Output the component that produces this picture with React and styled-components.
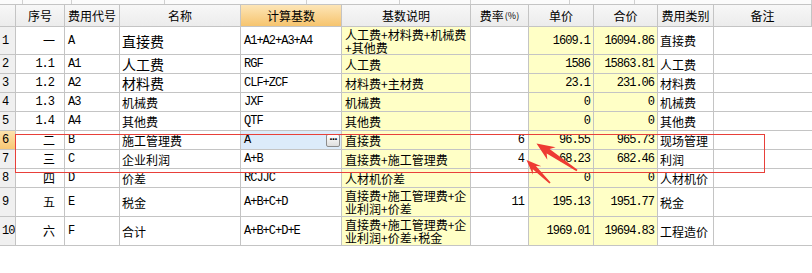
import React from "react";
import styled, { createGlobalStyle } from "styled-components";

const GlobalStyle = createGlobalStyle`
  html, body {
    margin: 0;
    padding: 0;
    background: #ffffff;
  }
`;

const CJK = `"Noto Sans CJK SC", "Noto Sans", sans-serif`;
const MONO = `"Liberation Mono", "Noto Sans CJK SC", monospace`;
const COLS = [16, 49, 55, 121, 101, 129, 58, 65, 64, 56, 98];
const LINE = "#c4c4c4";

const BG = {
  white: "#ffffff",
  yellow: "#ffffc6",
  blue: "#dcebfa",
  gray: "#f0f0f0",
  picked: "linear-gradient(#fde3ad, #f8c874)",
};

const Page = styled.div`
  position: relative;
  width: 812px;
  height: 273px;
  overflow: hidden;
  background: #fff;
  color: #000;
`;

const TopStrip = styled.div`
  display: flex;
  height: 4px;
  border-bottom: 1px solid ${LINE};
  background: #fbfbfb;
`;

const StripPart = styled.div`
  flex: 0 0 ${(p) => p.$w}px;
  box-sizing: border-box;
  border-right: 1px solid #d0d0d0;
`;

const Row = styled.div`
  display: grid;
  grid-template-columns: ${COLS.map((w) => w + "px").join(" ")};
  height: ${(p) => p.$h}px;
`;

const HeadCell = styled.div`
  box-sizing: border-box;
  display: flex;
  align-items: center;
  justify-content: center;
  border-right: 1px solid ${LINE};
  border-bottom: 1px solid ${LINE};
  background: ${(p) =>
    p.$active ? "linear-gradient(#fde5b6, #f6c46e)" : "linear-gradient(#f7f7f7, #ececec)"};
  font-family: ${CJK};
  font-size: 12px;
  white-space: nowrap;
`;

const Small = styled.span`
  font-size: 9px;
  margin-left: 1px;
`;

const Cell = styled.div`
  box-sizing: border-box;
  display: flex;
  align-items: center;
  justify-content: ${(p) =>
    p.$align === "right" ? "flex-end" : p.$align === "center" ? "center" : "flex-start"};
  padding: 0 ${(p) => p.$pr ?? 3}px 0 ${(p) => p.$pl ?? 3}px;
  border-right: ${(p) => (p.$last ? "none" : `1px solid ${LINE}`)};
  border-bottom: 1px solid ${LINE};
  background: ${(p) => BG[p.$bg || "white"]};
  font-family: ${(p) => (p.$mono ? MONO : CJK)};
  font-size: ${(p) => (p.$mono ? 12 : p.$size || 12)}px;
  letter-spacing: ${(p) => (p.$mono ? "-1px" : "0")};
  white-space: nowrap;
  overflow: hidden;
`;

const Lines = styled.span`
  display: block;
  line-height: 13px;
  white-space: nowrap;
`;

const MoreButton = styled.span`
  box-sizing: border-box;
  width: 14px;
  height: 13px;
  margin-left: auto;
  border: 1px solid #8c8c8c;
  border-radius: 2px;
  background: linear-gradient(#ffffff, #dedede);
  display: flex;
  align-items: center;
  justify-content: center;
  font-family: "DejaVu Sans", sans-serif;
  font-size: 9px;
  font-weight: bold;
  letter-spacing: -1px;
  line-height: 1;
  padding-bottom: 2px;
`;

const Highlight = styled.div`
  position: absolute;
  left: 15px;
  top: 134px;
  width: 750px;
  height: 39px;
  box-sizing: border-box;
  border: 1px solid #e8403a;
  pointer-events: none;
`;

const Overlay = styled.svg`
  position: absolute;
  left: 0;
  top: 0;
  pointer-events: none;
`;

const rows = [
  { n: 1, h: 28, seq: "一", code: "A", name: "直接费", big: true, base: "A1+A2+A3+A4", desc: ["人工费+材料费+机械费", "+其他费"], rate: "", price: "1609.1", total: "16094.86", cat: "直接费" },
  { n: 2, h: 19, seq: "1.1", code: "A1", name: "人工费", big: true, base: "RGF", desc: ["人工费"], rate: "", price: "1586", total: "15863.81", cat: "人工费" },
  { n: 3, h: 19, seq: "1.2", code: "A2", name: "材料费", big: true, base: "CLF+ZCF", desc: ["材料费+主材费"], rate: "", price: "23.1", total: "231.06", cat: "材料费" },
  { n: 4, h: 19, seq: "1.3", code: "A3", name: "机械费", base: "JXF", desc: ["机械费"], rate: "", price: "0", total: "0", cat: "机械费" },
  { n: 5, h: 19, seq: "1.4", code: "A4", name: "其他费", base: "QTF", desc: ["其他费"], rate: "", price: "0", total: "0", cat: "其他费" },
  { n: 6, h: 19, seq: "二", code: "B", name: "施工管理费", base: "A", desc: ["直接费"], rate: "6", price: "96.55", total: "965.73", cat: "现场管理", editing: true },
  { n: 7, h: 19, seq: "三", code: "C", name: "企业利润", base: "A+B", desc: ["直接费+施工管理费"], rate: "4", price: "68.23", total: "682.46", cat: "利润" },
  { n: 8, h: 19, seq: "四", code: "D", name: "价差", base: "RCJJC", desc: ["人材机价差"], rate: "", price: "0", total: "0", cat: "人材机价" },
  { n: 9, h: 29, seq: "五", code: "E", name: "税金", base: "A+B+C+D", desc: ["直接费+施工管理费+企", "业利润+价差"], rate: "11", price: "195.13", total: "1951.77", cat: "税金" },
  { n: 10, h: 29, seq: "六", code: "F", name: "合计", base: "A+B+C+D+E", desc: ["直接费+施工管理费+企", "业利润+价差+税金"], rate: "", price: "1969.01", total: "19694.83", cat: "工程造价" },
];

const arrowPoints = (tip, tail, headLen, headHalf, neckHalf, tailHalf) => {
  const dx = tail[0] - tip[0];
  const dy = tail[1] - tip[1];
  const len = Math.hypot(dx, dy);
  const ux = dx / len;
  const uy = dy / len;
  const px = -uy;
  const py = ux;
  const at = (d, w) => [tip[0] + ux * d + px * w, tip[1] + uy * d + py * w];
  const pts = [
    tip,
    at(headLen, headHalf),
    at(headLen - 4, neckHalf),
    at(len, tailHalf),
    at(len, -tailHalf),
    at(headLen - 4, -neckHalf),
    at(headLen, -headHalf),
  ];
  return pts.map((p) => p[0].toFixed(1) + "," + p[1].toFixed(1)).join(" ");
};

const Arrows = () => (
  <Overlay width="812" height="273" viewBox="0 0 812 273">
    <polygon points={arrowPoints([536.5, 143.5], [577, 170.5], 18, 7.5, 2.6, 0.9)} fill="#ee3b33" />
    <polygon points={arrowPoints([526.5, 160], [550, 183], 15, 6, 2.2, 0.8)} fill="#ee3b33" />
  </Overlay>
);

const strip = [23, 49, 93, 142, 93, 71, 99, 65, 177];

const App = () => {
  return (
    <Page>
      <GlobalStyle />
      <TopStrip>
        {strip.map((w, i) => (
          <StripPart key={i} $w={w} />
        ))}
      </TopStrip>
      <Row $h={22}>
        <HeadCell />
        <HeadCell>序号</HeadCell>
        <HeadCell>费用代号</HeadCell>
        <HeadCell>名称</HeadCell>
        <HeadCell $active>计算基数</HeadCell>
        <HeadCell>基数说明</HeadCell>
        <HeadCell>
          费率<Small>(%)</Small>
        </HeadCell>
        <HeadCell>单价</HeadCell>
        <HeadCell>合价</HeadCell>
        <HeadCell>费用类别</HeadCell>
        <HeadCell>备注</HeadCell>
      </Row>
      {rows.map((r) => (
        <Row key={r.n} $h={r.h}>
          <Cell $mono $bg={r.editing ? "picked" : "gray"} $pl={2}>
            {r.n}
          </Cell>
          <Cell $mono $align="right" $pr={10}>
            {r.seq}
          </Cell>
          <Cell $mono>{r.code}</Cell>
          <Cell $size={r.big ? 14 : 12} $pl={2}>
            {r.name}
          </Cell>
          <Cell $mono $bg={r.editing ? "blue" : "white"} $pr={r.editing ? 1 : 3}>
            {r.base}
            {r.editing && <MoreButton>···</MoreButton>}
          </Cell>
          <Cell $bg="yellow">
            {r.desc.length > 1 ? (
              <Lines>
                {r.desc.map((l, i) => (
                  <div key={i}>{l}</div>
                ))}
              </Lines>
            ) : (
              r.desc[0]
            )}
          </Cell>
          <Cell $mono $align="right" $pr={4}>
            {r.rate}
          </Cell>
          <Cell $mono $bg="yellow" $align="right">
            {r.price}
          </Cell>
          <Cell $mono $bg="yellow" $align="right">
            {r.total}
          </Cell>
          <Cell $pl={2}>{r.cat}</Cell>
          <Cell $last />
        </Row>
      ))}
      <Highlight />
      <Arrows />
    </Page>
  );
};

export default App;
